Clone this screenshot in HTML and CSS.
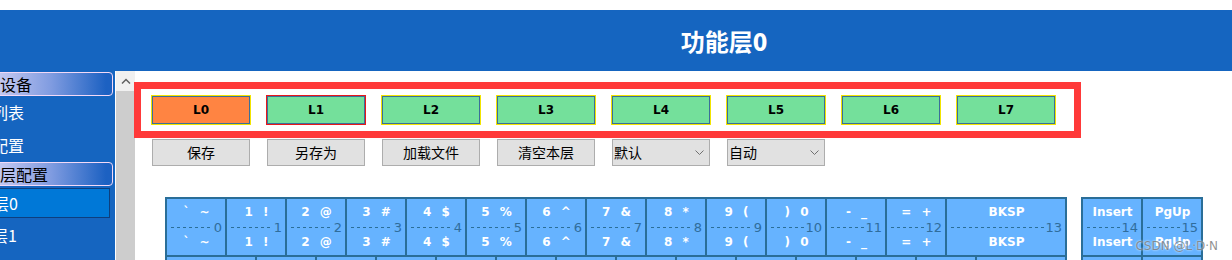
FILE: index.html
```html
<!DOCTYPE html>
<html lang="zh-CN">
<head>
    <meta charset="UTF-8">
    <title>功能层0</title>
    <link rel="stylesheet" href="styles.css">
</head>
<body>
    <div class="top-gap"></div>
    <header class="title-bar">
        <h1>功能层<b>0</b></h1>
    </header>

    <div class="main">
        <nav class="sidebar">
            <div class="tree">
                <div class="group">键盘设备</div>
                <div class="leaf">设备列表</div>
                <div class="leaf">按键配置</div>
                <div class="group">功能层配置</div>
                <div class="leaf active">功能层0</div>
                <div class="leaf">功能层1</div>
                <div class="leaf">功能层2</div>
            </div>
        </nav>

        <div class="scrollbar">
            <div class="scroll-up">
                <svg width="10" height="6" viewBox="0 0 10 6"><path d="M1 5.5 L5 1.5 L9 5.5" fill="none" stroke="#606060" stroke-width="1.5"/></svg>
            </div>
        </div>

        <section class="content">
            <div class="layers">
                <button class="layer current">L0</button>
                <button class="layer picked">L1</button>
                <button class="layer">L2</button>
                <button class="layer">L3</button>
                <button class="layer">L4</button>
                <button class="layer">L5</button>
                <button class="layer">L6</button>
                <button class="layer">L7</button>
            </div>

            <div class="actions">
                <div class="btn">保存</div>
                <div class="btn">另存为</div>
                <div class="btn">加载文件</div>
                <div class="btn">清空本层</div>
                <div class="btn pick">默认
                    <svg width="9" height="5" viewBox="0 0 9 5"><path d="M0.5 0.5 L4.5 4.5 L8.5 0.5" fill="none" stroke="#707070" stroke-width="1"/></svg>
                </div>
                <div class="btn pick">自动
                    <svg width="9" height="5" viewBox="0 0 9 5"><path d="M0.5 0.5 L4.5 4.5 L8.5 0.5" fill="none" stroke="#707070" stroke-width="1"/></svg>
                </div>
            </div>

            <div class="keyboard">
                <div class="block">
                    <div class="row">
                        <div class="key"><span class="lbl">` ~</span><span class="mid"><i class="dash"></i><span class="num">0</span></span><span class="lbl">` ~</span></div>
                        <div class="key"><span class="lbl">1 !</span><span class="mid"><i class="dash"></i><span class="num">1</span></span><span class="lbl">1 !</span></div>
                        <div class="key"><span class="lbl">2 @</span><span class="mid"><i class="dash"></i><span class="num">2</span></span><span class="lbl">2 @</span></div>
                        <div class="key"><span class="lbl">3 #</span><span class="mid"><i class="dash"></i><span class="num">3</span></span><span class="lbl">3 #</span></div>
                        <div class="key"><span class="lbl">4 $</span><span class="mid"><i class="dash"></i><span class="num">4</span></span><span class="lbl">4 $</span></div>
                        <div class="key"><span class="lbl">5 %</span><span class="mid"><i class="dash"></i><span class="num">5</span></span><span class="lbl">5 %</span></div>
                        <div class="key"><span class="lbl">6 ^</span><span class="mid"><i class="dash"></i><span class="num">6</span></span><span class="lbl">6 ^</span></div>
                        <div class="key"><span class="lbl">7 &amp;</span><span class="mid"><i class="dash"></i><span class="num">7</span></span><span class="lbl">7 &amp;</span></div>
                        <div class="key"><span class="lbl">8 *</span><span class="mid"><i class="dash"></i><span class="num">8</span></span><span class="lbl">8 *</span></div>
                        <div class="key"><span class="lbl">9 (</span><span class="mid"><i class="dash"></i><span class="num">9</span></span><span class="lbl">9 (</span></div>
                        <div class="key"><span class="lbl">) 0</span><span class="mid"><i class="dash"></i><span class="num">10</span></span><span class="lbl">) 0</span></div>
                        <div class="key"><span class="lbl">- _</span><span class="mid"><i class="dash"></i><span class="num">11</span></span><span class="lbl">- _</span></div>
                        <div class="key"><span class="lbl">= +</span><span class="mid"><i class="dash"></i><span class="num">12</span></span><span class="lbl">= +</span></div>
                        <div class="key wide"><span class="lbl">BKSP</span><span class="mid"><i class="dash"></i><span class="num">13</span></span><span class="lbl">BKSP</span></div>
                    </div>
                    <div class="row">
                        <div class="key half"><span class="lbl">Tab</span><span class="mid"><i class="dash"></i><span class="num">16</span></span><span class="lbl">Tab</span></div>
                        <div class="key"><span class="lbl">Q</span><span class="mid"><i class="dash"></i><span class="num">17</span></span><span class="lbl">Q</span></div>
                        <div class="key"><span class="lbl">W</span><span class="mid"><i class="dash"></i><span class="num">18</span></span><span class="lbl">W</span></div>
                        <div class="key"><span class="lbl">E</span><span class="mid"><i class="dash"></i><span class="num">19</span></span><span class="lbl">E</span></div>
                        <div class="key"><span class="lbl">R</span><span class="mid"><i class="dash"></i><span class="num">20</span></span><span class="lbl">R</span></div>
                        <div class="key"><span class="lbl">T</span><span class="mid"><i class="dash"></i><span class="num">21</span></span><span class="lbl">T</span></div>
                        <div class="key"><span class="lbl">Y</span><span class="mid"><i class="dash"></i><span class="num">22</span></span><span class="lbl">Y</span></div>
                        <div class="key"><span class="lbl">U</span><span class="mid"><i class="dash"></i><span class="num">23</span></span><span class="lbl">U</span></div>
                        <div class="key"><span class="lbl">I</span><span class="mid"><i class="dash"></i><span class="num">24</span></span><span class="lbl">I</span></div>
                        <div class="key"><span class="lbl">O</span><span class="mid"><i class="dash"></i><span class="num">25</span></span><span class="lbl">O</span></div>
                        <div class="key"><span class="lbl">P</span><span class="mid"><i class="dash"></i><span class="num">26</span></span><span class="lbl">P</span></div>
                        <div class="key"><span class="lbl">[ {</span><span class="mid"><i class="dash"></i><span class="num">27</span></span><span class="lbl">[ {</span></div>
                        <div class="key"><span class="lbl">] }</span><span class="mid"><i class="dash"></i><span class="num">28</span></span><span class="lbl">] }</span></div>
                        <div class="key half"><span class="lbl">\ |</span><span class="mid"><i class="dash"></i><span class="num">29</span></span><span class="lbl">\ |</span></div>
                    </div>
                </div>

                <div class="block">
                    <div class="row">
                        <div class="key"><span class="lbl">Insert</span><span class="mid"><i class="dash"></i><span class="num">14</span></span><span class="lbl">Insert</span></div>
                        <div class="key"><span class="lbl">PgUp</span><span class="mid"><i class="dash"></i><span class="num">15</span></span><span class="lbl">PgUp</span></div>
                    </div>
                    <div class="row">
                        <div class="key"><span class="lbl">Delete</span><span class="mid"><i class="dash"></i><span class="num">30</span></span><span class="lbl">Delete</span></div>
                        <div class="key"><span class="lbl">PgDn</span><span class="mid"><i class="dash"></i><span class="num">31</span></span><span class="lbl">PgDn</span></div>
                    </div>
                </div>
            </div>
        </section>
    </div>

    <div class="watermark">CSDN @L·D·N</div>
</body>
</html>
```

FILE: styles.css
```css
* {
    box-sizing: border-box;
}
html, body {
    margin: 0;
    height: 260px;
    overflow: hidden;
}
body {
    position: relative;
    display: flex;
    flex-direction: column;
    background: #fff;
    font-family: "DejaVu Sans", "Noto Sans CJK SC", sans-serif;
}
.top-gap {
    height: 10px;
    flex: none;
}
.title-bar {
    flex: none;
    height: 61px;
    background: #1565c0;
    display: flex;
    align-items: center;
    justify-content: center;
    padding-left: 216px;
}
.title-bar h1 {
    margin: 0;
    color: #fff;
    font-family: "Noto Sans CJK SC", sans-serif;
    font-size: 24px;
    font-weight: bold;
    line-height: 30px;
}

.main {
    flex: 1;
    display: flex;
    min-height: 0;
}

/* left tree, scrolled a bit to the right so labels are cut */
.sidebar {
    flex: none;
    width: 116px;
    background: #1565c0;
    border-right: 1px solid #fff;
    overflow: hidden;
}
.tree {
    width: 200px;
    margin-left: -40px;
    padding-top: 1px;
    font-family: "Noto Sans CJK SC", sans-serif;
    font-size: 16px;
}
.group {
    width: 153px;
    height: 24px;
    line-height: 22px;
    padding-left: 7px;
    color: #000;
    border: 1px solid #f3d9f7;
    border-radius: 4px;
    background: linear-gradient(to right, #eceaff 0%, #bcc3ef 30%, #7f9be0 60%, #1c61c2 96%);
}
.leaf {
    height: 33px;
    line-height: 33px;
    color: #fff;
}
.leaf.active {
    width: 150px;
    height: 30px;
    line-height: 28px;
    margin: 2px 0 1px;
    background: #0078d7;
    border: 1px solid #0d3f7e;
}

.scrollbar {
    flex: none;
    width: 19px;
    background: #cdcdcd;
}
.scroll-up {
    height: 20px;
    background: #f0f0f0;
    display: flex;
    align-items: center;
    justify-content: center;
}

.content {
    flex: 1;
    padding-top: 11px;
}

.layers {
    display: flex;
    gap: 15px;
    width: 947px;
    margin-left: -1px;
    padding: 6px 0 6px 10px;
    border: 7px solid #ff3939;
}
.layer {
    width: 100px;
    height: 30px;
    margin: 0;
    padding: 0;
    background: #74e09b;
    border: 1px solid #f2e400;
    box-shadow: inset 0 0 0 1px #3a6f9a;
    color: #000;
    font: bold 12px "DejaVu Sans", sans-serif;
}
.layer.current {
    background: #ff8442;
}
.layer.picked {
    border-color: #e81818;
}

.actions {
    display: flex;
    gap: 17px;
    margin-top: 1px;
    padding-left: 17px;
}
.btn {
    width: 98px;
    height: 27px;
    background: #e1e1e1;
    border: 1px solid #adadad;
    font: 14px "Noto Sans CJK SC", sans-serif;
    line-height: 25px;
    text-align: center;
    color: #000;
}
.btn.pick {
    display: flex;
    align-items: center;
    justify-content: space-between;
    padding: 0 5px 0 1px;
}

.keyboard {
    display: flex;
    align-items: flex-start;
    gap: 14px;
    margin: 31px 0 0 30px;
}
.block {
    border: 1px solid #2a6e98;
}
.row {
    display: flex;
}
.key {
    width: 60px;
    height: 58px;
    padding: 6px 3px 0 4px;
    background: #66b3ff;
    border: 1px solid #2a6e98;
    display: flex;
    flex-direction: column;
}
.key.wide {
    width: 120px;
}
.key.half {
    width: 90px;
}
.lbl {
    height: 15px;
    line-height: 15px;
    text-align: center;
    color: #fff;
    font: bold 12px "DejaVu Sans", sans-serif;
    word-spacing: 6px;
    white-space: pre;
}
.mid {
    height: 15px;
    display: flex;
    align-items: center;
}
.dash {
    flex: 1;
    height: 1px;
    background: repeating-linear-gradient(to right, #2a6e98 0 3px, transparent 3px 6px);
}
.num {
    margin-left: 1px;
    font: 13px "DejaVu Sans", sans-serif;
    line-height: 15px;
    color: #2f6d9c;
}

.watermark {
    position: absolute;
    right: 14px;
    bottom: 7px;
    font: 12px "DejaVu Sans", sans-serif;
    color: rgba(110, 110, 110, 0.75);
    text-shadow: 0 0 2px #fff;
}
```
